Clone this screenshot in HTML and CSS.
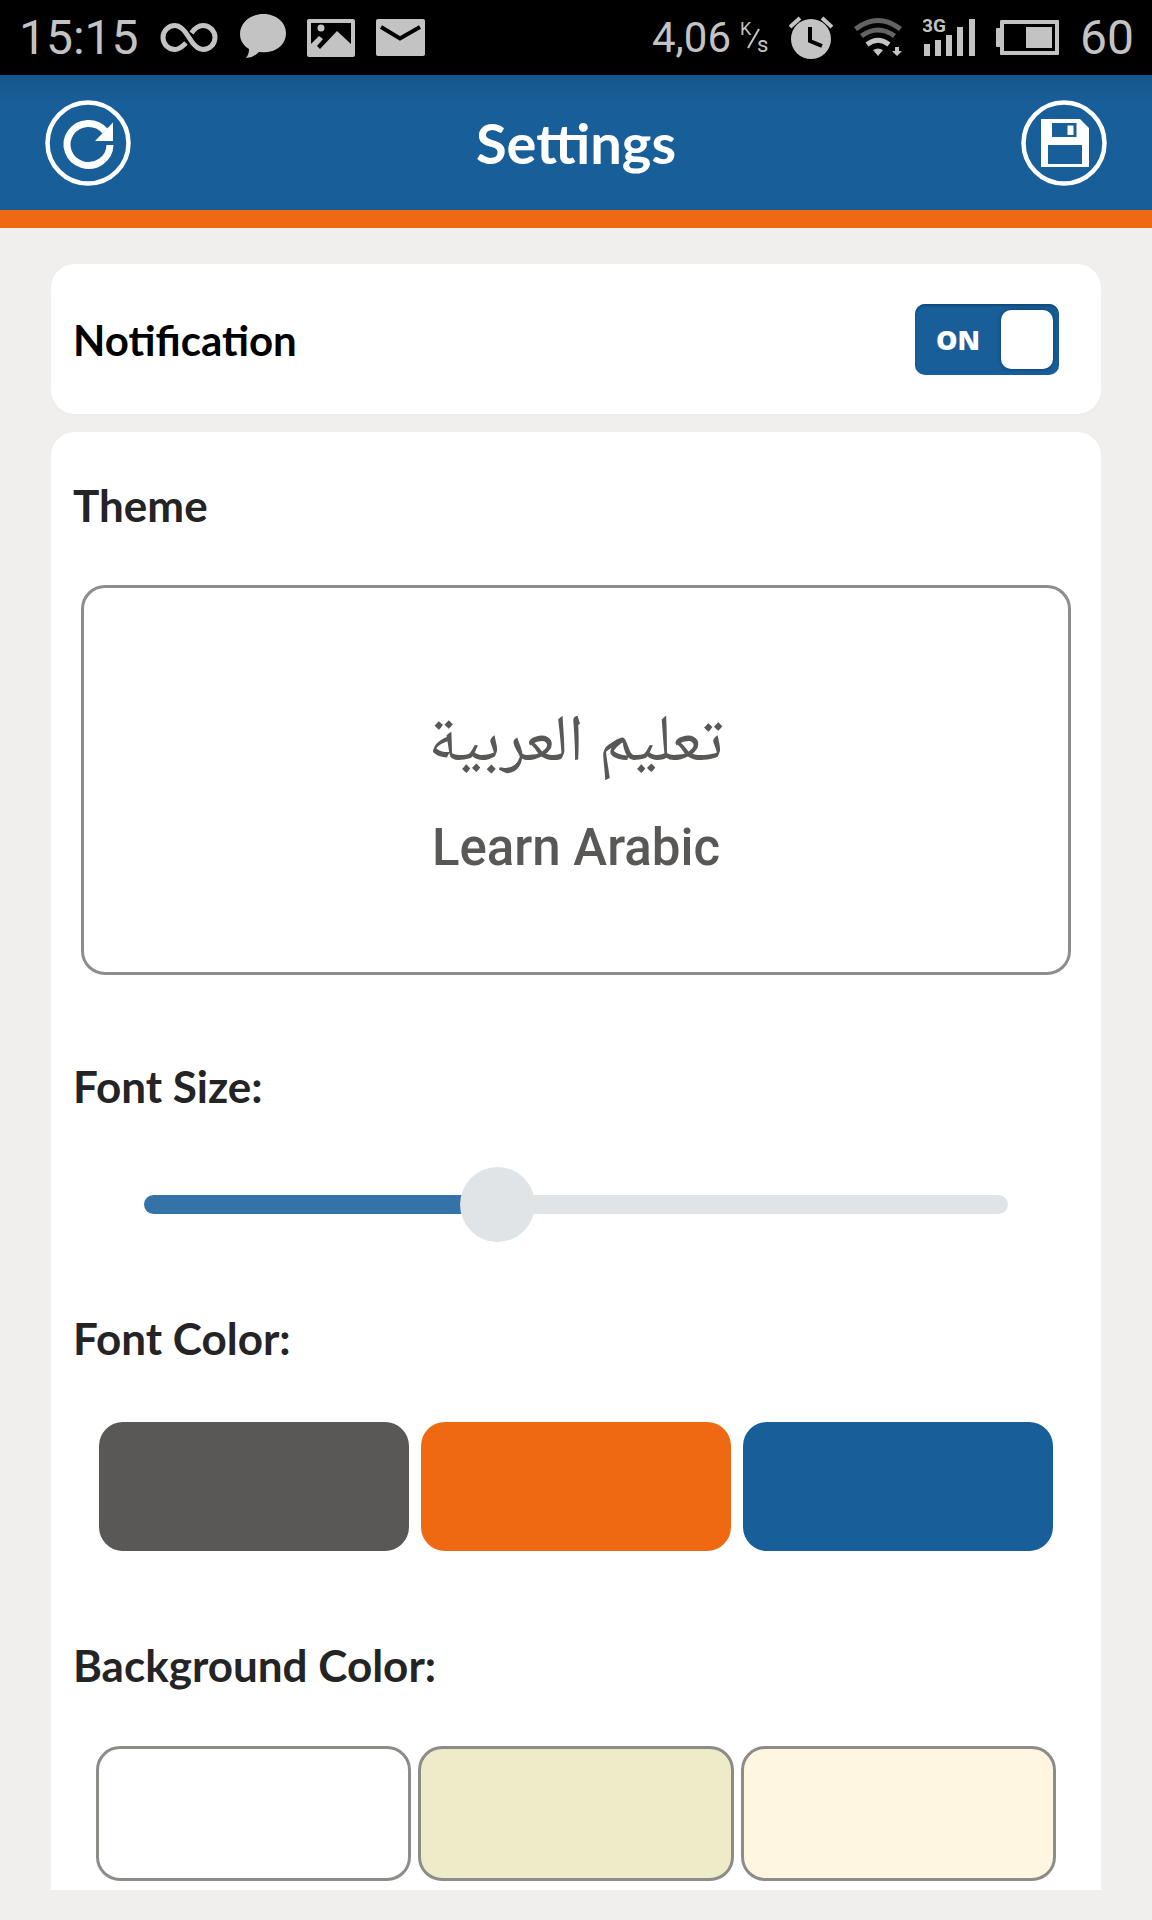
FILE: index.html
```html
<!DOCTYPE html>
<html lang="en">
<head>
<meta charset="utf-8">
<meta name="viewport" content="width=device-width, initial-scale=1">
<title>Settings</title>
<link rel="stylesheet" href="styles.css">
</head>
<body>
<div class="status-bar">
  <div class="status-group">
    <span class="status-text">15:15</span>
    <svg width="58" height="76" viewBox="0 0 58 76" fill="none" stroke="#c3c3c3" stroke-width="5" aria-hidden="true">
      <path d="M26 43C22 47 19 49.500 15 49.500A12 12 0 0 1 15 25.500C20 25.500 24 29 29 37.500S38 49.500 43 49.500A12 12 0 0 0 43 25.500C39 25.500 35 28 31.500 33"/>
    </svg>
    <svg width="47" height="76" viewBox="0 0 47 76" fill="#c3c3c3" aria-hidden="true">
      <path d="M24 14C11 14 1 23 1 34c0 7 4 12 9 15 0 4-1 6-3 9 6 0 10-3 13-6C35 54 47 46 47 33 47 22 37 14 24 14z"/>
    </svg>
    <svg width="48" height="76" viewBox="0 0 48 76" fill="#c3c3c3" aria-hidden="true">
      <path fill-rule="evenodd" d="M2 19h44q2 0 2 2v34q0 2-2 2H2q-2 0-2-2V21q0-2 2-2zM4 23v21l8-8 4 3-6 7 3 3L30 31l14 13V23z"/>
      <circle cx="14" cy="28" r="3.500"/>
    </svg>
    <svg width="49" height="76" viewBox="0 0 49 76" aria-hidden="true">
      <rect y="19" width="49" height="37" rx="2" fill="#c3c3c3"/>
      <path d="M5 27l19 11.500L44 27" fill="none" stroke="#000" stroke-width="4"/>
    </svg>
  </div>
  <div class="status-group">
    <div class="speed">
      <span class="speed-value">4,06</span>
      <svg width="28" height="76" viewBox="0 0 28 76" fill="#c3c3c3" role="img" aria-label="K/s">
        <text x="0" y="35" class="speed-unit">K</text>
        <path d="M8 48L19 29" stroke="#c3c3c3" stroke-width="2"/>
        <text x="17" y="52" class="speed-unit speed-time">s</text>
      </svg>
    </div>
    <svg width="44" height="76" viewBox="0 0 44 76" aria-hidden="true">
      <circle cx="22" cy="39" r="20" fill="#c3c3c3"/>
      <path d="M1 27l10-9M43 27l-10-9" stroke="#c3c3c3" stroke-width="4"/>
      <path d="M21 27v14l12 5" fill="none" stroke="#000" stroke-width="4"/>
    </svg>
    <svg width="48" height="76" viewBox="0 0 48 76" fill="none" aria-hidden="true">
      <path d="M1.500 29Q24 12 46.500 29M7.500 36Q24 24 40.500 36" stroke="#636363" stroke-width="5"/>
      <path d="M13 44.500Q24 36 35 44.500" stroke="#c3c3c3" stroke-width="5"/>
      <path d="M24 56l-5-6q5-3 10 0zM41 47h4v4h3l-5 5-5-5h3z" fill="#c3c3c3"/>
    </svg>
    <svg width="52" height="76" viewBox="0 0 52 76" fill="#c3c3c3" role="img" aria-label="3G">
      <text x="-1" y="32" class="network">3G</text>
      <path d="M1 44h6v12h-6zM12 40h6v16h-6zM23 35h6v21h-6zM34 27h6v29h-6zM46 19h6v37h-6z"/>
    </svg>
    <svg width="63" height="76" viewBox="0 0 63 76" fill="#c3c3c3" aria-hidden="true">
      <path fill-rule="evenodd" d="M6 20h56q1 0 1 1v33q0 1-1 1H5q-1 0-1-1v-7H1q-1 0-1-1V29q0-1 1-1h3v-7q0-1 2-1zM8 24v27h51V24z"/>
      <path d="M30 27h26v21H30z"/>
    </svg>
    <span class="status-text">60</span>
  </div>
</div>

<header class="app-bar">
  <button class="icon-button" type="button" aria-label="Reset">
    <svg width="86" height="86" viewBox="0 0 86 86" fill="none" stroke="#fff" aria-hidden="true">
      <circle cx="43" cy="43" r="40.500" stroke-width="4.500"/>
      <path d="M65 45A21.500 21 0 1 1 60 31" stroke-width="7"/>
      <path d="M68 22.500V41H50z" fill="#fff" stroke="none"/>
    </svg>
  </button>
  <h1 class="app-title">Settings</h1>
  <button class="icon-button" type="button" aria-label="Save">
    <svg width="86" height="86" viewBox="0 0 86 86" fill="#fff" aria-hidden="true">
      <circle cx="43" cy="43" r="40.500" fill="none" stroke="#fff" stroke-width="4.500"/>
      <path fill-rule="evenodd" d="M20 19h39l9 9v39H20zM31 23v14h24.500V23zM27 45v19h34V45z"/>
      <path d="M46.500 25.500h6V35h-6z"/>
    </svg>
  </button>
</header>

<main class="content">
  <section class="card card-row">
    <label class="heading strong" for="notification">Notification</label>
    <span class="switch">
      <input class="switch-input" type="checkbox" role="switch" id="notification" checked>
      <span class="switch-text" aria-hidden="true">ON</span>
    </span>
  </section>

  <section class="card card-theme">
    <h2 class="heading">Theme</h2>
    <div class="preview">
      <p class="preview-arabic" lang="ar" dir="rtl">تعليم العربية</p>
      <p class="preview-latin">Learn Arabic</p>
    </div>

    <label class="heading size-heading" for="font-size">Font Size:</label>
    <input class="slider" type="range" id="font-size" min="0" max="100" value="40">

    <h2 class="heading color-heading" id="font-color">Font Color:</h2>
    <div class="swatches" role="radiogroup" aria-labelledby="font-color">
      <input class="swatch gray" type="radio" name="font-color" aria-label="Gray">
      <input class="swatch orange" type="radio" name="font-color" aria-label="Orange">
      <input class="swatch blue" type="radio" name="font-color" aria-label="Blue">
    </div>

    <h2 class="heading background-heading" id="background-color">Background Color:</h2>
    <div class="swatches outlined" role="radiogroup" aria-labelledby="background-color">
      <input class="swatch white" type="radio" name="background-color" aria-label="White">
      <input class="swatch olive" type="radio" name="background-color" aria-label="Olive">
      <input class="swatch cream" type="radio" name="background-color" aria-label="Cream">
    </div>
  </section>
</main>
</body>
</html>
```
FILE: styles.css
```css
* {
  box-sizing: border-box;
}

body {
  margin: 0;
  background: #f0efed;
  color: #242424;
  font-family: Lato, "Liberation Sans", sans-serif;
}

.status-bar {
  display: flex;
  justify-content: space-between;
  height: 75px;
  padding: 0 18px 0 19px;
  background: #000;
  color: #c3c3c3;
  font-family: Roboto, sans-serif;
}

.status-group {
  display: flex;
  align-items: center;
  gap: 21px;
}

.status-text {
  font-size: 48px;
  line-height: 78px;
}

.speed {
  display: flex;
  align-items: center;
  gap: 9px;
}

.speed-value {
  font-size: 42px;
  line-height: 76px;
}

.speed-unit {
  font-size: 18px;
}

.speed-time {
  font-size: 22px;
}

.network {
  font-size: 19px;
  font-weight: 700;
}

.app-bar {
  display: flex;
  align-items: center;
  justify-content: space-between;
  height: 153px;
  padding: 0 45px;
  border-bottom: 18px solid #ee6911;
  background: linear-gradient(#15568a, #185e99 28px);
  color: #fff;
}

.app-title {
  margin: 0;
  font-size: 56px;
  font-weight: 700;
  line-height: 72px;
}

.icon-button {
  display: block;
  padding: 0;
  border: 0;
  background: none;
}

.icon-button svg {
  display: block;
}

.content {
  display: flex;
  flex-direction: column;
  gap: 18px;
  padding: 36px 51px 31px;
}

.card {
  border-radius: 24px;
  background: #fff;
}

.card-row {
  display: flex;
  align-items: center;
  justify-content: space-between;
  padding: 40px 42px 39px 22px;
  box-shadow: 0 2px 2px #ebebeb;
}

.card-theme {
  padding: 43px 30px 9px;
  border-radius: 24px 24px 0 0;
}

.heading {
  display: block;
  margin: 0;
  font-size: 44px;
  font-weight: 700;
  line-height: 60px;
}

.card-theme .heading {
  margin: 0 0 50px -8px;
}

.strong {
  color: #000;
  font-size: 42px;
}

.switch {
  display: grid;
  align-items: center;
}

.switch > * {
  grid-area: 1 / 1;
}

.switch-input {
  display: flex;
  justify-content: flex-end;
  width: 144px;
  height: 71px;
  margin: 0;
  padding: 6px;
  border-radius: 10px;
  background: #185e99;
  box-shadow: inset 0 2px 2px #104a7e;
  appearance: none;
}

.switch-input::before {
  content: "";
  width: 52px;
  border-radius: 10px;
  background: #fff;
  box-shadow: 0 0 4px #0c3d68;
}

.switch-text {
  padding-left: 21px;
  color: #fff;
  font-family: "Open Sans", sans-serif;
  font-size: 27px;
  font-weight: 800;
  line-height: 40px;
  pointer-events: none;
}

.preview {
  display: flex;
  flex-direction: column;
  align-items: center;
  height: 390px;
  padding-top: 108px;
  border: 3px solid #8d8d8d;
  border-radius: 24px;
  color: #595856;
}

.preview p {
  margin: 0;
}

.preview-arabic {
  font-family: "Noto Naskh Arabic", "Liberation Serif", serif;
  font-size: 66px;
  line-height: 100px;
}

.preview-latin {
  font-family: Roboto, sans-serif;
  font-size: 51px;
  font-weight: 500;
  line-height: 104px;
}

.card-theme .size-heading {
  margin-top: 81px;
  margin-bottom: 51px;
}

.card-theme .color-heading {
  margin-top: 66px;
  margin-bottom: 54px;
}

.card-theme .background-heading {
  margin-top: 84px;
  margin-bottom: 51px;
}

.slider {
  display: block;
  width: calc(100% - 126px);
  height: 75px;
  margin: 0 63px;
  background: none;
  appearance: none;
}

.slider::-webkit-slider-runnable-track {
  height: 19px;
  border-radius: 10px;
  background: linear-gradient(90deg, #3373a7 42%, #e0e4e7 42%);
}

.slider::-webkit-slider-thumb {
  width: 75px;
  height: 75px;
  margin-top: -28px;
  border-radius: 50%;
  background: #e0e4e7;
  appearance: none;
}

.swatches {
  display: grid;
  grid-template-columns: repeat(3, 1fr);
  gap: 12px;
  padding: 0 18px;
}

.swatch {
  height: 129px;
  margin: 0;
  border-radius: 24px;
  appearance: none;
}

.outlined {
  gap: 7px;
  padding: 0 15px;
}

.outlined .swatch {
  height: 135px;
  border: 3px solid #8c8d89;
}

.gray {
  background: #595856;
}

.orange {
  background: #ee6911;
}

.blue {
  background: #185e99;
}

.white {
  background: #fff;
}

.olive {
  background: #edebc8;
}

.cream {
  background: #fef6e0;
}
```
